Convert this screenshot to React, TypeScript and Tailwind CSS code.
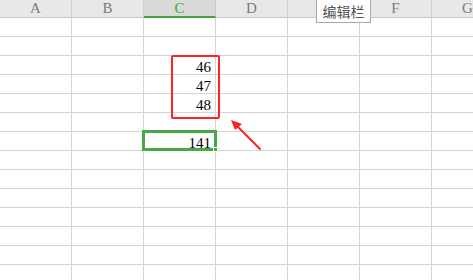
import React from 'react';

const COLUMNS = ['A', 'B', 'C', 'D', 'E', 'F', 'G'];
const ROW_COUNT = 14;

// column C values, keyed by row index
const VALUES: Record<number, string> = { 2: '46', 3: '47', 4: '48', 6: '141' };

export default function App() {
  return (
    <div className="relative w-[473px] h-[280px] overflow-hidden bg-white font-['Liberation_Serif',serif]">
      {/* Column headers */}
      <div className="flex h-[18px]">
        {COLUMNS.map(col => (
          <div
            key={col}
            className={
              col === 'C'
                ? 'shrink-0 w-[72px] h-[18px] bg-[#dadada] border-r border-[#c8c8c8] border-b-2 border-b-[#3fa43f] flex items-center justify-center text-[15px] leading-none text-[#3fa43f]'
                : 'shrink-0 w-[72px] h-[18px] bg-[#e8e8e8] border-r border-[#d0d0d0] border-b border-b-[#c8c8c8] flex items-center justify-center text-[15px] leading-none text-[#7a7a7a]'
            }
          >
            {col === 'E' ? '' : col}
          </div>
        ))}
      </div>

      {/* Grid body */}
      {Array.from({ length: ROW_COUNT }).map((_, r) => (
        <div key={r} className="flex h-[19px]">
          {COLUMNS.map(col => (
            <div
              key={col}
              className="shrink-0 w-[72px] h-[19px] border-r border-b border-[#d4d4d4] flex items-end justify-end pr-[4px] text-[15px] leading-[14px] text-black"
            >
              {col === 'C' ? VALUES[r] ?? '' : ''}
            </div>
          ))}
        </div>
      ))}

      {/* Selected cell */}
      <div className="absolute left-[142px] top-[130px] w-[75px] h-[21px] border-[3px] border-[#46a846]" />
      <div className="absolute left-[213px] top-[147px] w-[5px] h-[5px] bg-[#46a846] border border-white" />

      {/* Annotation box */}
      <div className="absolute left-[171px] top-[55px] w-[49px] h-[64px] border-2 border-[#ff2424] rounded-[2px]" />

      {/* Annotation arrow */}
      <svg className="absolute left-[226px] top-[114px]" width="40" height="40" viewBox="0 0 40 40">
        <line x1="34.5" y1="35.5" x2="9" y2="10" stroke="#ff2020" strokeWidth="2" />
        <polygon points="5,6 16,10 9,16" fill="#ff2020" />
      </svg>

      {/* Tooltip */}
      <div className="absolute left-[316px] top-0 w-[55px] h-[23px] bg-white border border-t-0 border-[#a8a8a8] flex items-center justify-center text-[14px] text-[#555] font-['Noto_Sans_CJK_SC',sans-serif]">
        编辑栏
      </div>
    </div>
  );
}
